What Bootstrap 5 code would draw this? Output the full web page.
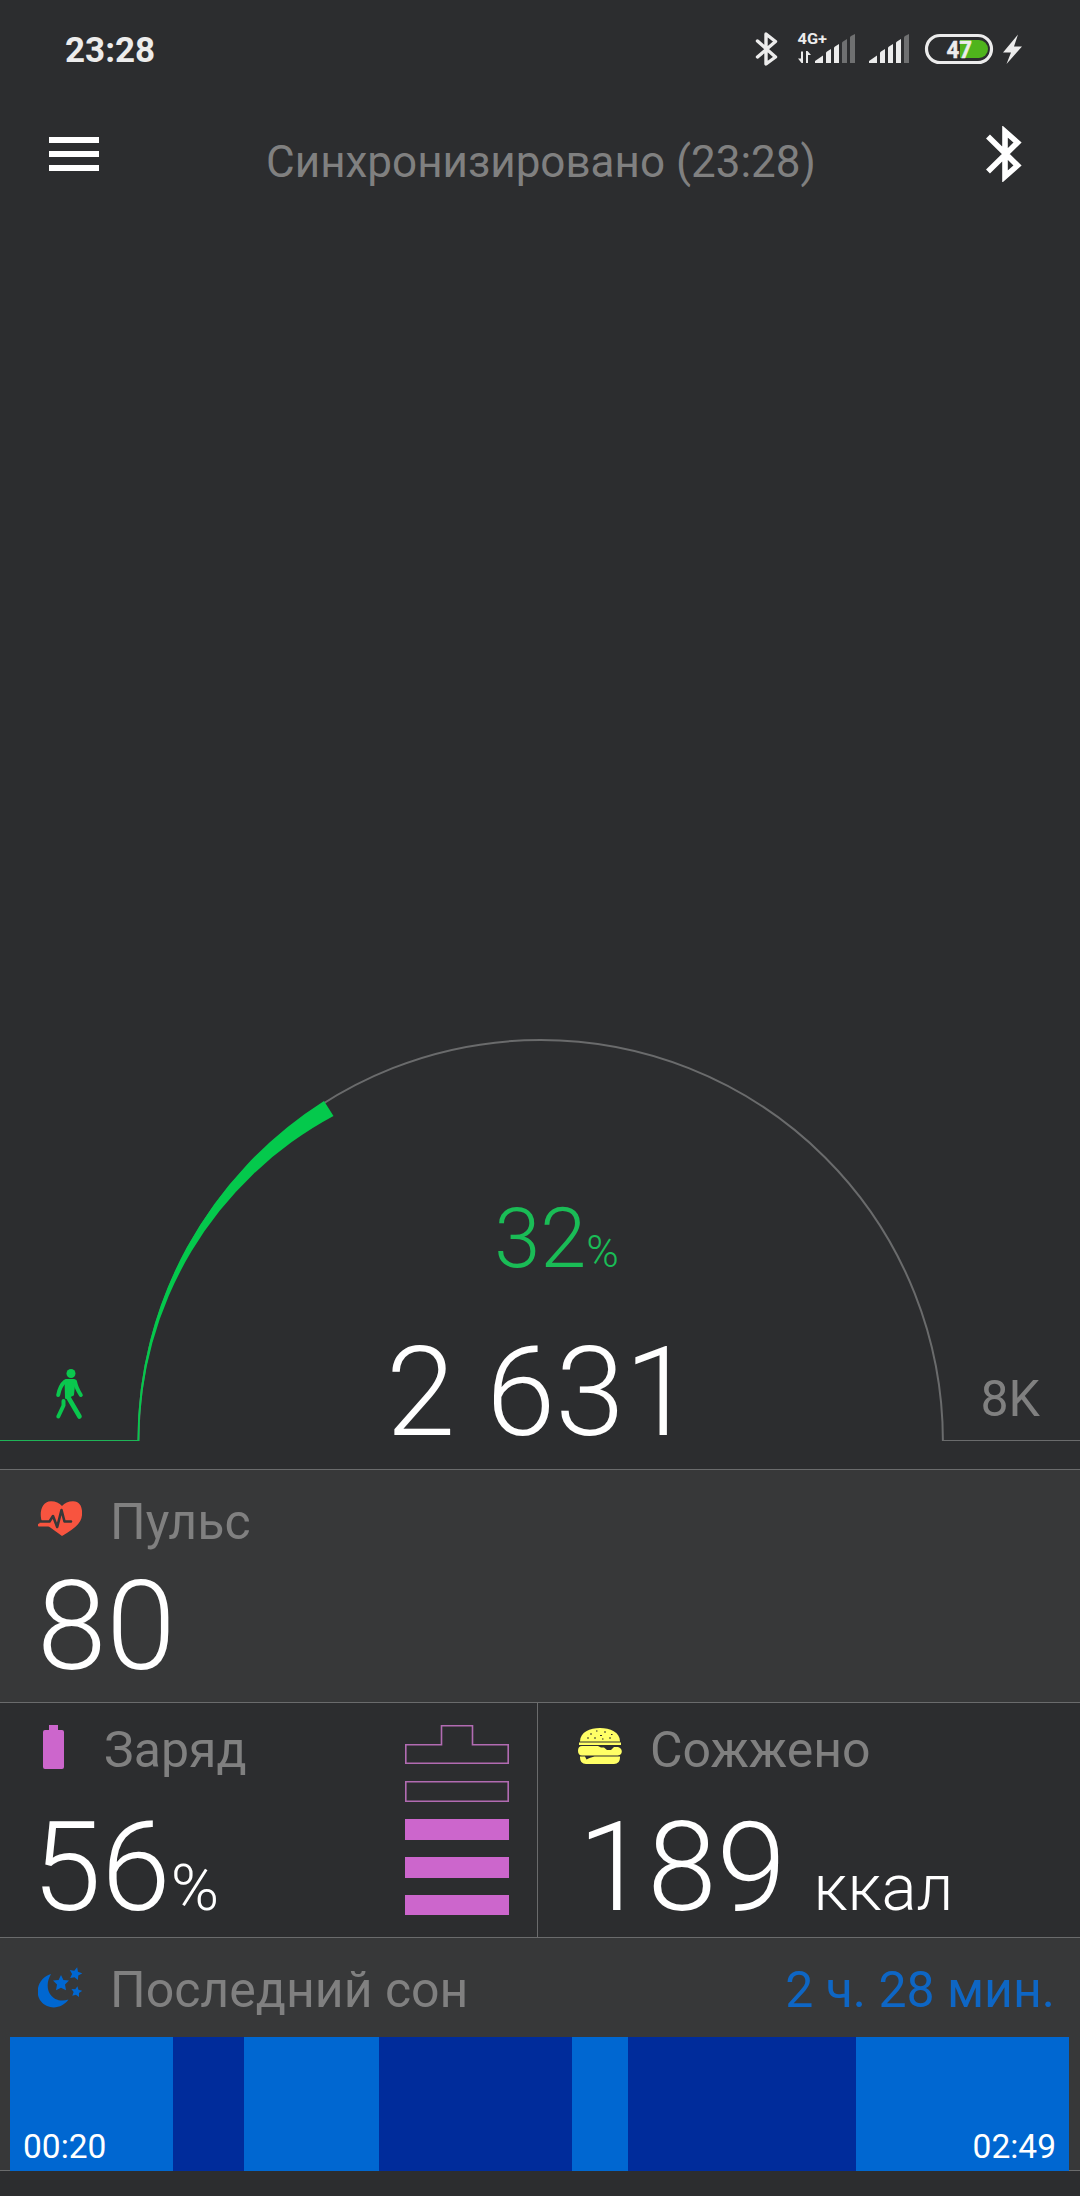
<!DOCTYPE html>
<html lang="ru">
<head>
<meta charset="utf-8">
<meta name="viewport" content="width=device-width, initial-scale=1">
<title>Mi Band</title>
<link href="https://cdn.jsdelivr.net/npm/bootstrap@5.3.0/dist/css/bootstrap.min.css" rel="stylesheet">
<style>
body{background:#2c2d2f;color:#fff;font-family:Roboto,"Noto Sans",sans-serif;line-height:1;overflow:hidden}
.screen{width:1080px;height:2196px}
svg{display:block;flex:none}
.statusbar{height:100px;padding:22px 57px 0 65px;color:#ececec}
.clock{font-size:35px;font-weight:700;padding-top:11px}
.sysicons{width:270px;height:50px}
.topbar{height:100px;padding:26px 58px 0 49px}
.sync{font-size:44px;color:#808080;padding:14px 3px 0 0}
.dim{color:#808080}
.hero{height:1269px}
.gauge{height:439px}
.pct{font-size:83px;font-weight:300;color:#1abc56;padding:167px 0 0 33px}
.pct span{font-size:44px}
.steps{font-size:125px;font-weight:300;padding:50px 0 0}
.goal{right:40px;top:344px;font-size:50px}
.tile{border-top:1px solid #6a6b6c}
.lit{background:#373839}
.label-text{font-size:50px;color:#808080;white-space:nowrap}
.big{font-size:125px;font-weight:300;white-space:nowrap}
.unit{font-size:65.5px}
.pulse{height:233px;padding:27px 38px 0}
.pulse .big{padding-top:17px;margin-left:-1px}
.pair{height:235px}
.pair .big{padding-top:30px}
.charge{width:538px;border-right:1px solid #6a6b6c;padding:22px 28px 0 38px}
.charge .label-text{padding-left:22px}
.charge .big{margin-left:-6px}
.burn{padding:22px 0 0 40px}
.burn .label-text{padding-left:28px}
.burn .unit{margin-left:-3px}
.sleep{height:234px;padding-top:27px;border-bottom:1px solid #6a6b6c}
.sleephead{height:72px;padding:0 25px 0 38px}
.dur{color:#0e66c4}
.bars{height:134px;margin:0 11px 0 10px}
.light-sleep{background:#0067d1}
.deep-sleep{background:#002c9b}
.stamp{font-size:33.5px;padding:0 13px 8px}
</style>
<script src="https://cdn.jsdelivr.net/npm/bootstrap@5.3.0/dist/js/bootstrap.bundle.min.js"></script>
</head>
<body>
<main class="screen d-flex flex-column">
  <div class="statusbar d-flex justify-content-between">
    <div class="clock">23:28</div>
    <svg class="sysicons" viewBox="753 22 270 50" fill="#ececec">
      <path d="M757.5 41 775.5 57 766 64V34L775.5 41.500 757.5 57" fill="none" stroke="#ececec" stroke-width="3.4" stroke-linejoin="round" stroke-linecap="round"/>
      <text x="797.500" y="44" font-size="15.500" font-weight="700" textLength="29.500" lengthAdjust="spacingAndGlyphs">4G+</text>
      <path d="M801 51.500h2V63h-1.500l-3.500-4.500h3zM806 63h2V55h3l-3.500-4H806z"/>
      <path d="M815 63v-2l8-5.500V63zM826 63V53q0-1 1-1.500l4-2.500V63zM834 63V48q0-1 1-1.500l4-2.500V63z"/>
      <path d="M842 63V43q0-1 1-1.500l4-2.500V63zM850 63V37.500q0-1 1-1.500l4-2V63z" fill="#6f7071"/>
      <path d="M869 63v-2l8-5.500V63zM880 63V53q0-1 1-1.500l4-2.500V63zM888 63V48q0-1 1-1.500l4-2.500V63zM896 63V43q0-1 1-1.500l4-2.500V63z"/>
      <path d="M904 63V37.500q0-1 1-1.500l4-2V63z" fill="#6f7071"/>
      <rect x="926.500" y="35.500" width="65" height="27" rx="13.500" fill="none" stroke="#ececec" stroke-width="3.200"/>
      <path d="M960 40h19a9 9 0 0 1 0 18h-19z" fill="#4fb41c"/>
      <text x="946.500" y="57.800" font-size="24.500" font-weight="700" textLength="25.500" lengthAdjust="spacingAndGlyphs" stroke="#ececec" stroke-width=".5">47</text>
      <path d="M1018 34.500 1003 52.500h8l-4.500 11.500L1022 46.500h-8z"/>
    </svg>
  </div>

  <div class="topbar d-flex justify-content-between align-items-start">
    <svg width="50" height="45" viewBox="0 0 50 45" fill="#fff"><path d="M0 11h50v6H0zM0 25h50v6H0zM0 39h50v6H0z"/></svg>
    <div class="sync">Синхронизировано (23:28)</div>
    <svg width="36" height="56" viewBox="0 0 36 56" fill="none" stroke="#fff" stroke-width="5.600"><path d="M2 10.500 31.500 39.500 19 50.500V5.500L31.500 16.500 2 45.500"/></svg>
  </div>

  <section class="hero d-flex flex-column justify-content-end">
    <div class="gauge position-relative">
      <svg class="position-absolute top-0 start-0" width="1080" height="439" viewBox="0 1030 1080 439">
        <path d="M138.500 1441A402.200 401 0 0 1 942.900 1441" fill="none" stroke="#6a6b6c" stroke-width="2"/>
        <path d="M942 1440.500H1080" stroke="#6a6b6c"/>
        <path d="M0 1440.500H138" stroke="#1fb457"/>
        <path d="M137.500 1441A403 402 0 0 1 324 1101L333.500 1116A368 368 0 0 0 139.200 1441z" fill="#04c94c"/>
        <g stroke="#0ac74e" fill="#0ac74e" stroke-linecap="round" stroke-linejoin="round">
          <circle cx="71" cy="1373.500" r="4.500" stroke="none"/>
          <path d="M66 1380.500h8l-1.500 14-6 3z" stroke-width="3"/>
          <path d="M65 1381.500q-5 4-6.800 13.500M75 1381.500q1 6 5.800 13.500" fill="none" stroke-width="4"/>
          <path d="M67.500 1396 79.500 1416.500" fill="none" stroke-width="4.600"/>
          <path d="M63.500 1401v4.500L58.300 1416.500" fill="none" stroke-width="4"/>
        </g>
      </svg>
      <div class="position-absolute top-0 start-0 w-100 text-center">
        <div class="pct">32<span>%</span></div>
        <div class="steps">2 631</div>
      </div>
      <div class="goal dim position-absolute">8K</div>
    </div>
  </section>

  <section class="tile lit pulse">
    <div class="d-flex">
      <svg width="44" height="50" viewBox="38 1497 44 50">
        <path d="M62 1536C57 1532 50 1527.500 47 1525H39.500v-3.500H42C39 1514 41 1501.500 51 1501.300q7 0 11 4.700 4-4.700 11-4.700c8 .2 9.500 7 9 14-.8 9-9 14-20 20.700z" fill="#f8543f"/>
        <path d="M39 1521.500H49.500L53 1516l4.200 11L61.500 1510l3 11.500H71" fill="none" stroke="#373839" stroke-width="2.600" stroke-linecap="round" stroke-linejoin="round"/>
        <path d="M39.500 1525h10" stroke="#f8543f" stroke-width="3.200" stroke-linecap="round"/>
      </svg>
      <div class="label-text ps-4 ms-1">Пульс</div>
    </div>
    <div class="big">80</div>
  </section>

  <section class="tile pair d-flex">
    <div class="charge d-flex justify-content-between">
      <div>
        <div class="d-flex">
          <svg width="44" height="50" viewBox="38 1725 44 50"><path d="M49 1725h9v5h4q2 0 2 2v35q0 2-2 2H45q-2 0-2-2v-35q0-2 2-2h4z" fill="#cc66cc"/></svg>
          <div class="label-text">Заряд</div>
        </div>
        <div class="big">56<span class="unit">%</span></div>
      </div>
      <svg width="104" height="191" viewBox="405 1725 104 191" fill="#cc66cc">
        <path d="M405.800 1763.200V1744.800H441.500V1725.800H472.500V1744.800H508.200V1763.200zM405.800 1781.800H508.200V1801.200H405.800z" fill="none" stroke="#b26bb2" stroke-width="1.600"/>
        <path d="M405 1819h104v21H405zM405 1857h104v21H405zM405 1895h104v20H405z"/>
      </svg>
    </div>
    <div class="burn">
      <div class="d-flex">
        <svg width="44" height="50" viewBox="578 1725 44 50" fill="#ffff66">
          <path d="M580 1741.500C580 1732 590 1728 600 1728S620 1732 620 1741.500z"/>
          <path d="M579 1742.500h42v2.500h-42zM582 1746h16l3 1.500 3 0 3 2.500 4 0 3-3h4q3.800 1 3.800 4.500 0 3.500-4 4H582q-4-.3-4-4.800t4-4.700zM580 1756.500h5l1.500 3 3-1.500 5-1.500H620v1q0 6.500-6 6.500H586q-6 0-6-6.500z"/>
          <path d="M590 1734h2M596 1731h1.500M604 1732h2M587 1738h2M594 1738h2M600 1735.500h2M609 1738h2M611 1734.500h1.500M602 1739h1.500" stroke="#2c2d2f" stroke-width="1.200"/>
        </svg>
        <div class="label-text">Сожжено</div>
      </div>
      <div class="big">189 <span class="unit">ккал</span></div>
    </div>
  </section>

  <section class="tile lit sleep">
    <div class="sleephead d-flex">
      <svg width="44" height="50" viewBox="38 1965 44 50" fill="#0067d1">
        <path d="M51 1974C35 1979 33 2000 47 2006 55 2009.500 64 2006 68.500 1999.500 61 2002 54 2000 50 1994 46.500 1988 47 1981 51 1974z"/>
        <path id="st" d="M0-8 2.400-3 8-2.400 4 1.600 5 7.200 0 4.700-5 7.200-4 1.600-8-2.400-2.400-3z" transform="translate(61 1983)"/>
        <use href="#st" transform="translate(75.500 1973.500) rotate(15) scale(.8) translate(-61 -1983)"/>
        <use href="#st" transform="translate(76.500 1991.500) rotate(10) scale(.68) translate(-61 -1983)"/>
      </svg>
      <div class="label-text ps-4 ms-1">Последний сон</div>
      <div class="label-text dur ms-auto">2 ч. 28 мин.</div>
    </div>
    <div class="bars d-flex">
      <div class="light-sleep stamp d-flex align-items-end" style="width:163px">00:20</div>
      <div class="deep-sleep" style="width:71px"></div>
      <div class="light-sleep" style="width:135px"></div>
      <div class="deep-sleep" style="width:193px"></div>
      <div class="light-sleep" style="width:56px"></div>
      <div class="deep-sleep" style="width:228px"></div>
      <div class="light-sleep stamp d-flex align-items-end justify-content-end" style="width:213px">02:49</div>
    </div>
  </section>
</main>
</body>
</html>
